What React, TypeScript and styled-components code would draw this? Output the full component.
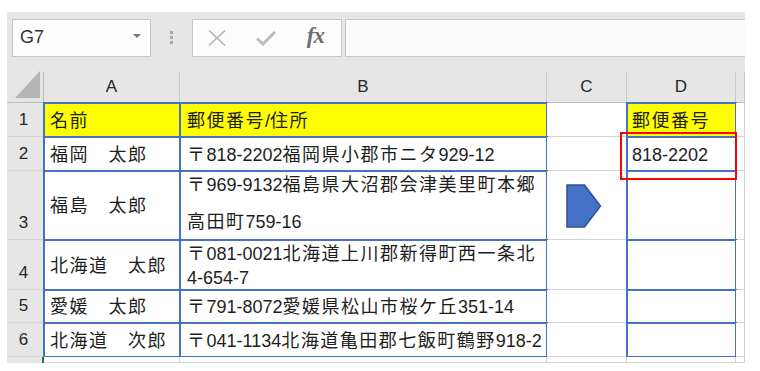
import styled, { createGlobalStyle } from 'styled-components'

const GlobalStyle = createGlobalStyle`
  body {
    margin: 0;
    background: #fff;
    font-family: 'Liberation Sans', 'Noto Sans CJK JP', sans-serif;
  }
`

// CJK runs are spaced wider than the latin digits around them
const CJK = /([\u3000-\u30ff\u3400-\u9fff\uff01-\uff5e]+)/

function Jp({ text }: { text: string }) {
  return <>{text.split(CJK).map((part, i) => (i % 2 === 1 ? <Wide key={i}>{part}</Wide> : part))}</>
}

type Row = {
  num: string
  height: number
  name: string
  address: string[]
  spread?: boolean
  zip?: string
  header?: boolean
}

const rows: Row[] = [
  { num: '1', height: 34, name: '名前', address: ['郵便番号/住所'], zip: '郵便番号', header: true },
  { num: '2', height: 34, name: '福岡　太郎', address: ['〒818-2202福岡県小郡市ニタ929-12'], zip: '818-2202' },
  { num: '3', height: 69, name: '福島　太郎', address: ['〒969-9132福島県大沼郡会津美里町本郷', '高田町759-16'], spread: true },
  { num: '4', height: 50, name: '北海道　太郎', address: ['〒081-0021北海道上川郡新得町西一条北', '4-654-7'] },
  { num: '5', height: 33, name: '愛媛　太郎', address: ['〒791-8072愛媛県松山市桜ケ丘351-14'] },
  { num: '6', height: 34, name: '北海道　次郎', address: ['〒041-1134北海道亀田郡七飯町鶴野918-2'] },
]

export default function App() {
  return (
    <Page>
      <GlobalStyle />
      <Window>
        <FormulaBar>
          <NameBox>
            G7
            <Caret />
          </NameBox>
          <Grip>
            <Dot />
            <Dot />
            <Dot />
          </Grip>
          <FxButtons>
            <svg width="18" height="16" viewBox="0 0 18 16">
              <path d="M1 0.5 L17 15.5 M17 0.5 L1 15.5" stroke="#b4b4b4" strokeWidth="1.6" fill="none" />
            </svg>
            <svg width="20" height="15" viewBox="0 0 20 15">
              <path d="M1 7.5 L7 13 L19 1" stroke="#bcbcbc" strokeWidth="3" fill="none" />
            </svg>
            <Fx>fx</Fx>
          </FxButtons>
          <FormulaInput />
        </FormulaBar>

        <Sheet $rows={rows.map(r => r.height)}>
          <Corner>
            <svg width="26" height="27" viewBox="0 0 26 27">
              <polygon points="25,0 25,27 0,27" fill="#b5b5b5" />
            </svg>
          </Corner>
          <ColHead>A</ColHead>
          <ColHead>B</ColHead>
          <ColHead>C</ColHead>
          <ColHead>D</ColHead>
          <ColHead />

          {rows.map(row => (
            <Line key={row.num} row={row} />
          ))}

          <RowHead $selected />
          <Cell />
          <Cell />
          <Cell />
          <Cell />
          <Cell />

          <Highlight />
        </Sheet>
      </Window>
    </Page>
  )
}

function Line({ row }: { row: Row }) {
  return (
    <>
      <RowHead>{row.num}</RowHead>
      <Cell $boxed $fill={row.header} $pad={6}>
        <Jp text={row.name} />
      </Cell>
      <Cell $boxed $fill={row.header} $pad={7} $spread={row.spread}>
        {row.address.map(line => (
          <div key={line}>
            <Jp text={line} />
          </div>
        ))}
      </Cell>
      <Cell $center>
        {row.num === '3' && (
          <svg width="36" height="44" viewBox="0 0 36 44">
            <polygon points="1,1 18.5,1 34.5,22 18.5,43 1,43" fill="#4472c4" stroke="#2f528f" strokeWidth="1.5" />
          </svg>
        )}
      </Cell>
      <Cell $boxed $fill={row.header} $pad={5}>
        {row.zip && <Jp text={row.zip} />}
      </Cell>
      <Cell />
    </>
  )
}

const Page = styled.div`
  padding: 12px 0 0 7px;
`

const Window = styled.div`
  width: 738px;
  height: 351px;
  background: #e6e6e6;
  overflow: hidden;
`

const FormulaBar = styled.div`
  display: flex;
  height: 45px;
  box-sizing: border-box;
  padding: 7px 0 0 5px;
`

const NameBox = styled.div`
  width: 139px;
  height: 38px;
  box-sizing: border-box;
  border: 1px solid #c6c6c6;
  background: #fdfdfd;
  display: flex;
  align-items: center;
  justify-content: space-between;
  padding: 0 9px 1px 7px;
  font-size: 18px;
  color: #333;
`

const Caret = styled.span`
  width: 0;
  height: 0;
  border-left: 4px solid transparent;
  border-right: 4px solid transparent;
  border-top: 4px solid #777;
  margin-bottom: 3px;
`

const Grip = styled.div`
  width: 41px;
  display: flex;
  flex-direction: column;
  align-items: center;
  justify-content: center;
  gap: 2px;
  padding-bottom: 1px;
`

const Dot = styled.span`
  width: 3px;
  height: 3px;
  background: #a8a8a8;
`

const FxButtons = styled.div`
  width: 150px;
  height: 38px;
  box-sizing: border-box;
  border: 1px solid #c6c6c6;
  background: #fdfdfd;
  display: flex;
  align-items: center;
  justify-content: space-between;
  padding: 0 17px 0 15px;
`

const Fx = styled.span`
  font-family: 'Liberation Serif', 'DejaVu Serif', serif;
  font-style: italic;
  font-weight: bold;
  font-size: 23px;
  letter-spacing: -1px;
  color: #6e6e6e;
  margin-bottom: 4px;
`

const FormulaInput = styled.div`
  flex: 1;
  height: 38px;
  margin-left: 3px;
  box-sizing: border-box;
  border: 1px solid #c6c6c6;
  border-right: none;
  background: #fbfbfb;
`

const Sheet = styled.div<{ $rows: number[] }>`
  position: relative;
  margin-top: 15px;
  display: grid;
  grid-template-columns: 37px 136px 367px 80px 109px 9px;
  grid-template-rows: 31px ${({ $rows }) => $rows.map(h => `${h}px`).join(' ')} 6px;
  font-size: 18px;
  color: #1e1e1e;
`

const Corner = styled.div`
  display: flex;
  align-items: flex-end;
  justify-content: flex-end;
  padding: 0 2px 4px 0;
  border-right: 1px solid #bdbdbd;
  border-bottom: 1px solid #bdbdbd;
`

const ColHead = styled.div`
  display: flex;
  align-items: center;
  justify-content: center;
  font-size: 17px;
  color: #262626;
  border-right: 1px solid #c8c8c8;
  border-bottom: 1px solid #bdbdbd;
`

const RowHead = styled.div<{ $selected?: boolean }>`
  display: flex;
  align-items: flex-end;
  justify-content: center;
  padding: 0 3px 6px 0;
  line-height: 20px;
  font-size: 17px;
  color: #262626;
  border-right: 1px solid #bdbdbd;
  border-bottom: 1px solid #d6d6d6;
  ${({ $selected }) => $selected && `border-right: 2px solid #217346;`}
`

const Cell = styled.div<{ $boxed?: boolean; $fill?: boolean; $pad?: number; $spread?: boolean; $center?: boolean }>`
  display: flex;
  flex-direction: column;
  justify-content: center;
  padding: 2px 0 0 ${({ $pad }) => $pad ?? 0}px;
  line-height: 24px;
  white-space: nowrap;
  overflow: visible;
  background: ${({ $fill }) => ($fill ? '#ffff00' : '#fff')};
  border-right: 1px solid #d4d4d4;
  border-bottom: 1px solid #d4d4d4;

  ${({ $boxed }) => $boxed && `
    outline: 2px solid #4472c4;
    outline-offset: -1px;
  `}

  ${({ $spread }) => $spread && `
    justify-content: space-between;
    padding-top: 2px;
    padding-bottom: 5px;
  `}

  ${({ $center }) => $center && `
    align-items: center;
    padding-right: 5px;
  `}
`

const Wide = styled.span`
  letter-spacing: 1.5px;
`

const Highlight = styled.div`
  position: absolute;
  z-index: 2;
  left: 613px;
  top: 60px;
  width: 117px;
  height: 48px;
  box-sizing: border-box;
  border: 2px solid #ff0000;
`
